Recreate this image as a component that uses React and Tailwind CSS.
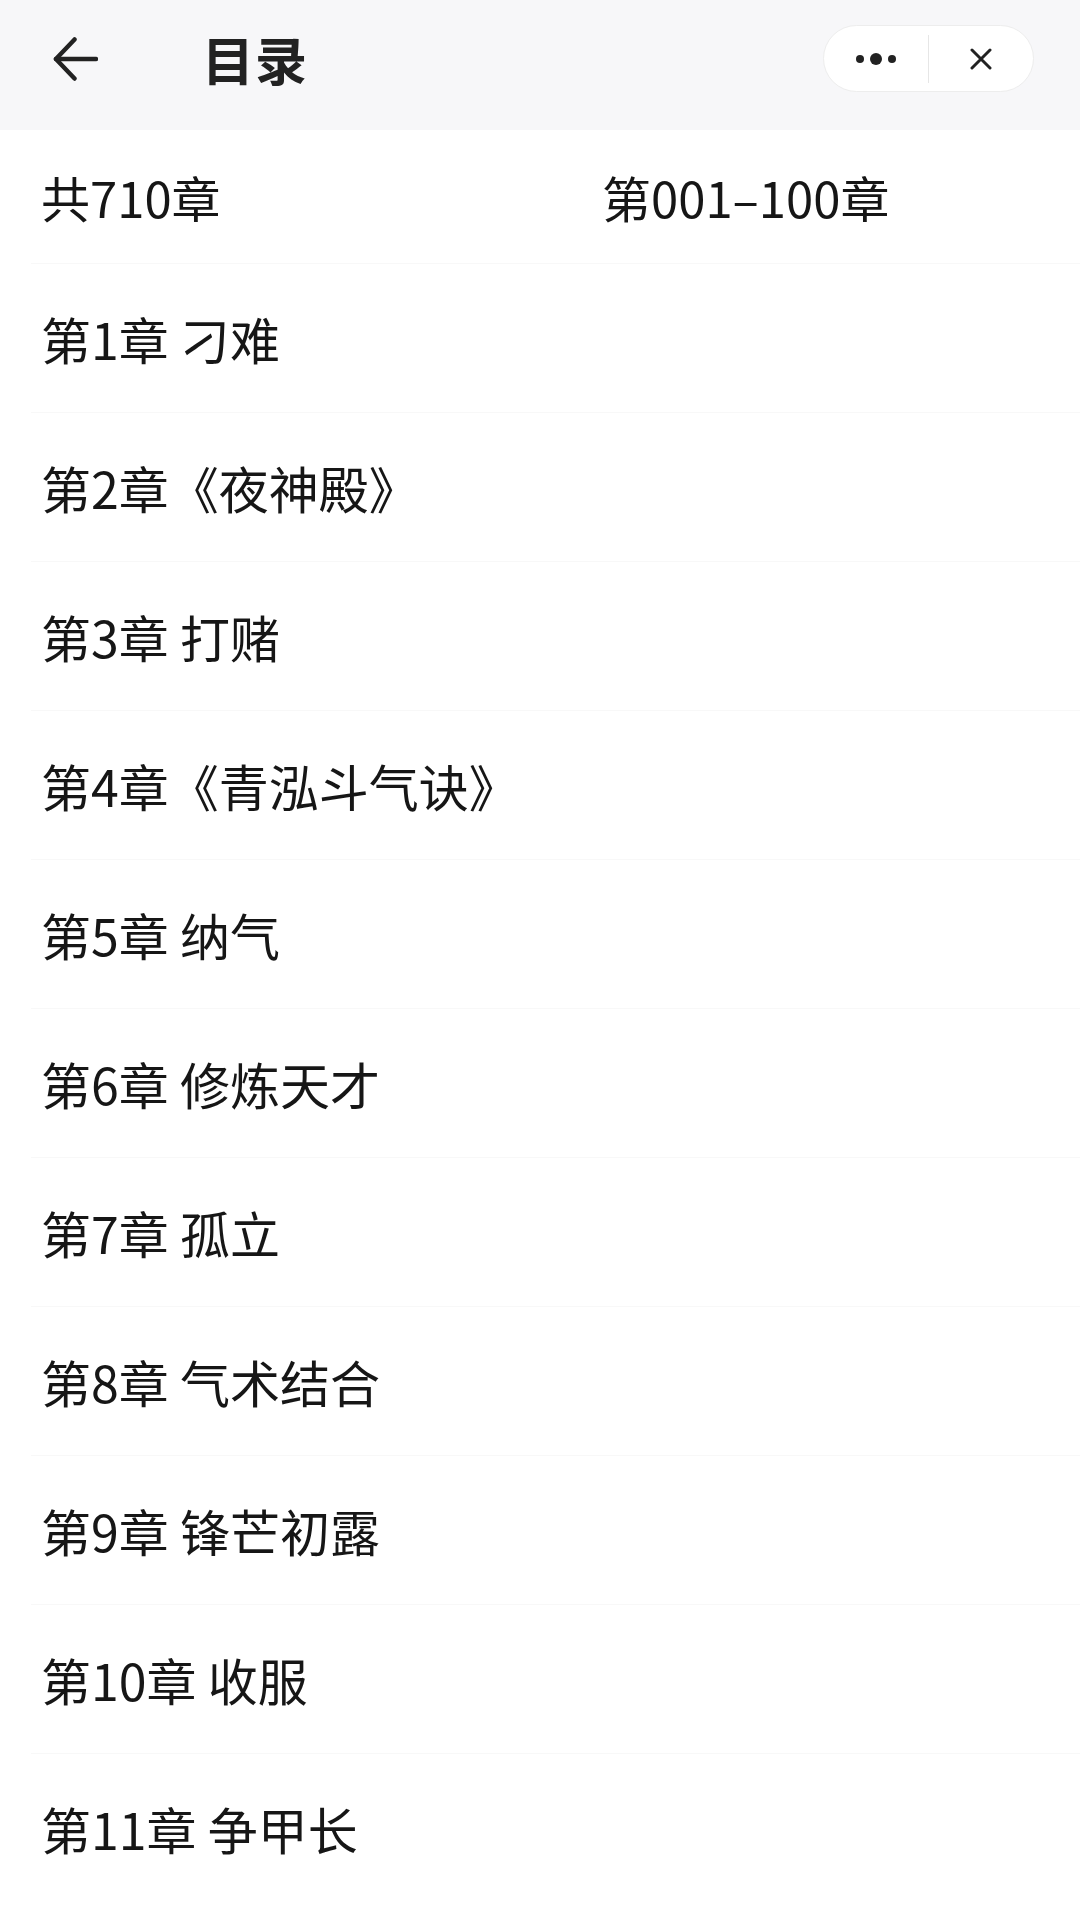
import React from 'react';

const chapters = [
  '第1章 刁难',
  '第2章《夜神殿》',
  '第3章 打赌',
  '第4章《青泓斗气诀》',
  '第5章 纳气',
  '第6章 修炼天才',
  '第7章 孤立',
  '第8章 气术结合',
  '第9章 锋芒初露',
  '第10章 收服',
  '第11章 争甲长',
];

const font = { fontFamily: '"Noto Sans CJK SC", "Noto Sans", sans-serif' };

const App = () => {
  return (
    <div className="w-[1080px] h-[1920px] overflow-hidden bg-white text-[#161616]" style={font}>
      {/* Top bar */}
      <div className="h-[130px] bg-[#f7f7f9] flex items-start relative">
        <div className="flex items-center h-[117px]">
          <button className="w-[98px] pl-[53px] flex items-center">
            <svg width="46" height="46" viewBox="0 0 46 46" fill="none" stroke="#222" strokeWidth="4.5" strokeLinecap="round" strokeLinejoin="round">
              <path d="M44 23H3" />
              <path d="M22 3L3 23l19 20" />
            </svg>
          </button>
          <h1 className="ml-[104px] text-[52px] font-bold leading-none tracking-[1px] text-[#222]">目录</h1>
        </div>
        <div className="absolute left-[823px] top-[25px] w-[211px] h-[67px] rounded-full bg-white border border-[#ededed] flex items-center">
          <div className="w-[104px] h-full flex items-center justify-center gap-[6px]">
            <span className="w-[8px] h-[8px] rounded-full bg-[#222]" />
            <span className="w-[12px] h-[12px] rounded-full bg-[#222]" />
            <span className="w-[8px] h-[8px] rounded-full bg-[#222]" />
          </div>
          <div className="w-px h-[48px] bg-[#e6e6e6]" />
          <div className="flex-1 h-full flex items-center justify-center">
            <svg width="22" height="22" viewBox="0 0 22 22" stroke="#222" strokeWidth="3" strokeLinecap="round">
              <path d="M2 2l18 18M20 2L2 20" />
            </svg>
          </div>
        </div>
      </div>

      {/* Summary row */}
      <div className="h-[133px] flex items-center pl-[41px] text-[49px] leading-none">
        <span className="w-[561px]">共710章</span>
        <span>第001–100章</span>
      </div>

      {/* Chapter list */}
      <div>
        {chapters.map((c) => (
          <div key={c} className="ml-[31px] h-[149px] flex items-center pl-[10px] border-t border-[#f8f8f8] text-[50px] leading-none whitespace-pre">
            {c}
          </div>
        ))}
      </div>
    </div>
  );
};

export default App;
